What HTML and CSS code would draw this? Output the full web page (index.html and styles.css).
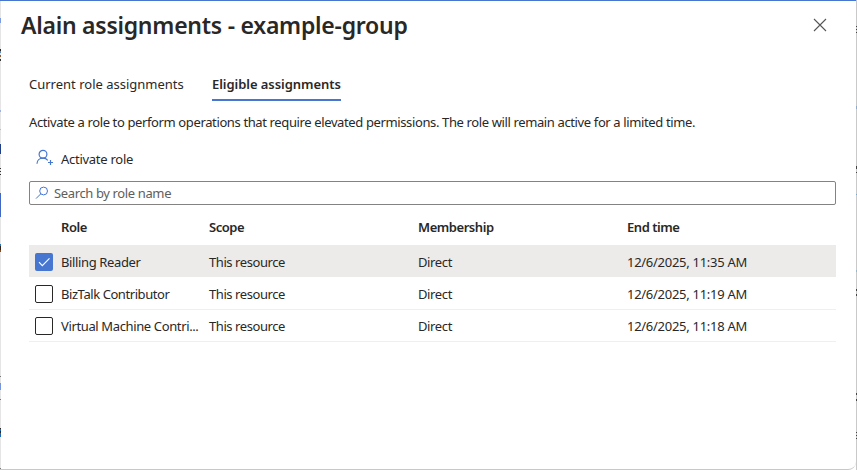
FILE: index.html
```html
<!DOCTYPE html>
<html lang="en">
<head>
<meta charset="utf-8">
<title>Alain assignments - example-group</title>
<link rel="stylesheet" href="styles.css">
</head>
<body>
<div class="backdrop">
<div class="edge edge-left"></div>
<main class="panel">
  <header class="header">
    <h1 class="title">Alain assignments - example-group</h1>
    <svg class="close" viewBox="0 0 14 14"><path d="M1 1 13 13M13 1 1 13"/></svg>
  </header>
  <nav class="tabs">
    <span class="tab tab-current">Current role assignments</span>
    <span class="tab tab-active">Eligible assignments</span>
  </nav>
  <p class="description">Activate a role to perform operations that require elevated permissions. The role will remain active for a limited time.</p>
  <div class="command">
    <svg class="person" viewBox="0 0 18 18"><circle cx="7" cy="5.3" r="3.9"/><path d="M1 14.8C1 11.4 3.6 9.2 7 9.2c2 0 3.7.8 4.8 2.1M14.5 11v5M12 13.5h5"/></svg>
    <span class="command-label">Activate role</span>
  </div>
  <div class="search">
    <svg class="magnifier" viewBox="0 0 14 14"><circle cx="8.6" cy="5" r="3.9"/><path d="M5.8 7.8 1 12.6"/></svg>
    <span class="placeholder">Search by role name</span>
  </div>
  <div class="grid">
    <div class="row head"><span></span><span>Role</span><span>Scope</span><span>Membership</span><span>End time</span></div>
    <div class="row selected"><span class="box checked"><svg viewBox="0 0 18 18"><path d="M4 9.2 7.3 12.7 14.5 5.3"/></svg></span><span>Billing Reader</span><span class="scope">This resource</span><span>Direct</span><span class="end">12/6/2025, 11:35 AM</span></div>
    <div class="row after-selected"><span class="box"></span><span class="biztalk">BizTalk Contributor</span><span class="scope">This resource</span><span>Direct</span><span class="end">12/6/2025, 11:19 AM</span></div>
    <div class="row"><span class="box"></span><span>Virtual Machine Contri...</span><span class="scope">This resource</span><span>Direct</span><span class="end">12/6/2025, 11:18 AM</span></div>
  </div>
</main>
<div class="edge edge-right"></div>
</div>
</body>
</html>
```
FILE: styles.css
```css
* { box-sizing: border-box; }
body {
  margin: 0;
  width: 857px;
  height: 470px;
  overflow: hidden;
  background: #fff;
  color: #292827;
  font: 13px/18px "Noto Sans", "Open Sans", sans-serif;
}
svg { display: block; fill: none; flex: none; }
.backdrop {
  display: grid;
  grid-template-columns: 1px 855px 1px;
  height: 470px;
  background: #fff;
}
.edge-left {
  background: linear-gradient(#4676d0 1px, #e5e5e5 1px 18px, #7d9ce0 18px 23px, #e5e5e5 23px 49px, #292827 49px 51px, #5d8cbc 51px 53px, #e5e5e5 53px 55px, #87603d 55px 57px, #e5e5e5 57px 59px, #333 59px 61px, #e5e5e5 61px 110px, #9eb2e2 110px 112px, #e5e5e5 112px 129px, #bbb 129px 130px, #e5e5e5 130px 144px, #203f86 144px 154px, #e5e5e5 154px 168px, #333 168px 169px, #e5e5e5 169px 171px, #333 171px 172px, #e5e5e5 172px 174px, #333 174px 175px, #e5e5e5 175px 193px, #4167c2 193px 217px, #e5e5e5 217px 244px, #2878b9 244px 246px, #30241e 246px 250px, #874a1c 250px 252px, #e5e5e5 252px 376px, #777 376px 377px, #e5e5e5 377px 383px, #7795da 383px 390px, #e5e5e5 390px 399px, #777 399px 400px, #e5e5e5 400px 428px, #292827 428px 429px, #2067af 429px 431px, #292827 431px 433px, #2067af 433px 437px, #e5e5e5 437px 468px, #777 468px 469px, #c8c8c8 469px);
}
.edge-right {
  background: linear-gradient(#b8c5dd 1px, #c9c9c9 1px 26px, #444 26px 27px, #c9c9c9 27px 29px, #444 29px 30px, #c9c9c9 30px 32px, #444 32px 33px, #c9c9c9 33px 106px, #8fa9cb 106px 109px, #c9c9c9 109px 166px, #444 166px 169px, #c9c9c9 169px 172px, #444 172px 173px, #c9c9c9 173px 194px, #79a9ca 194px 195px, #c9c9c9 195px 270px, #94b9ce 270px 272px, #c9c9c9 272px 289px, #444 289px 291px, #c9c9c9 291px 294px, #444 294px 296px, #c9c9c9 296px 393px, #444 393px 395px, #c9c9c9 395px 399px, #444 399px 401px, #c9c9c9 401px 432px, #444 432px 433px, #c9c9c9 433px 435px, #444 435px 436px, #c9c9c9 436px 438px, #444 438px 439px, #c9c9c9 439px);
}
.panel {
  height: 470px;
  padding: 0 20px 0 28px;
  border-top: 1px solid #4676d0;
  border-bottom: 1px solid #c8c8c8;
  border-bottom-right-radius: 8px;
}
.header {
  display: flex;
  justify-content: space-between;
  height: 68px;
  margin-left: -8px;
}
.title {
  margin: 8px 0 0;
  font-size: 23px;
  font-weight: 600;
  letter-spacing: -0.25px;
  line-height: 32px;
  white-space: nowrap;
}
.close { width: 14px; height: 14px; margin: 17px 9px 0 0; stroke: #555; stroke-width: 1.1; }
.tabs { display: flex; gap: 29px; height: 32px; }
.tab { height: 32px; padding-top: 6px; white-space: nowrap; }
.tab-current { width: 154px; }
.tab-active { width: 129px; font-weight: 600; letter-spacing: -0.05px; border-bottom: 2px solid #4676d0; }
.description { margin: 12px 0 0; height: 18px; letter-spacing: -0.375px; white-space: nowrap; }
.command { display: flex; height: 50px; padding: 18px 0 0 7px; gap: 7px; }
.person { width: 18px; height: 18px; stroke: #4676d0; stroke-width: 1.2; }
.command-label { margin-top: 1px; letter-spacing: -0.27px; white-space: nowrap; }
.search {
  display: flex;
  align-items: center;
  width: 807px;
  height: 24px;
  padding-left: 5px;
  gap: 5px;
  border: 1px solid #858381;
  border-radius: 2px;
  color: #605e5c;
}
.magnifier { width: 14px; height: 14px; stroke: #4676d0; stroke-width: 1; }
.placeholder { letter-spacing: -0.37px; white-space: nowrap; }
.grid { width: 807px; border-bottom: 1px solid #f0efee; }
.row {
  display: grid;
  grid-template-columns: 32px 148px 209px 209px 1fr;
  align-items: center;
  height: 32px;
  border-top: 1px solid #f0efee;
  padding-top: 1px;
  letter-spacing: -0.37px;
  white-space: nowrap;
}
.head { height: 40px; padding-top: 4px; font-weight: 600; letter-spacing: -0.45px; border: 0; }
.selected { background: #ecebe9; border-color: #ecebe9; }
.after-selected { border-color: #fff; }
.scope, .biztalk { letter-spacing: -0.43px; }
.end { letter-spacing: -0.28px; }
.box { width: 18px; height: 18px; margin-left: 6px; border: 1px solid #292827; border-radius: 2px; background: #fff; }
.checked { border: 0; background: #4676d0; }
.checked path { stroke: #fff; stroke-width: 1.1; }
```
